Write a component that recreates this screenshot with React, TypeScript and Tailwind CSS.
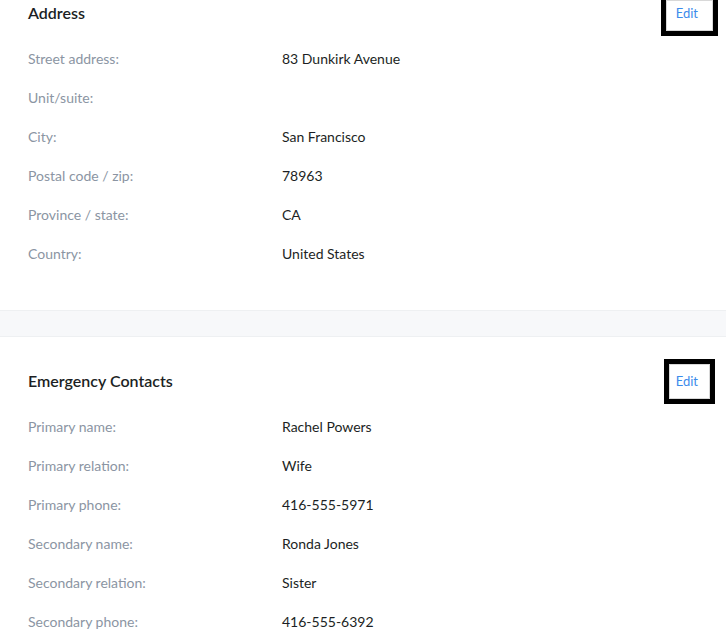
type Row = { label: string; value: string };

const address: Row[] = [
  { label: "Street address:", value: "83 Dunkirk Avenue" },
  { label: "Unit/suite:", value: "" },
  { label: "City:", value: "San Francisco" },
  { label: "Postal code / zip:", value: "78963" },
  { label: "Province / state:", value: "CA" },
  { label: "Country:", value: "United States" },
];

const contacts: Row[] = [
  { label: "Primary name:", value: "Rachel Powers" },
  { label: "Primary relation:", value: "Wife" },
  { label: "Primary phone:", value: "416-555-5971" },
  { label: "Secondary name:", value: "Ronda Jones" },
  { label: "Secondary relation:", value: "Sister" },
  { label: "Secondary phone:", value: "416-555-6392" },
];

const EditButton = ({ boxClass }: { boxClass: string }) => {
  return (
    <button className="relative text-[13px] text-[#3b8beb] leading-none">
      Edit
      <span
        className={`absolute border-black border-[5px] outline outline-1 outline-[#d8d8d8] -outline-offset-[6px] ${boxClass}`}
      />
    </button>
  );
};

const Section = ({
  title,
  rows,
  className,
  boxClass,
}: {
  title: string;
  rows: Row[];
  className: string;
  boxClass: string;
}) => {
  return (
    <section className={`bg-white px-7 ${className}`}>
      <div className="flex h-[42px] items-center justify-between">
        <h2 className="text-[16px] font-semibold text-[#1c1f24]">{title}</h2>
        <EditButton boxClass={boxClass} />
      </div>
      <div className="mt-[5px]">
        {rows.map((r) => (
          <div key={r.label} className="flex h-[39px] items-center text-[14px]">
            <span className="w-[254px] text-[#8b95a3]">{r.label}</span>
            <span className="text-[#1c1f24]">{r.value}</span>
          </div>
        ))}
      </div>
    </section>
  );
};

export default function App() {
  return (
    <div
      className="h-[637px] w-[726px] overflow-hidden bg-white"
      style={{ fontFamily: "Lato, 'Noto Sans', sans-serif" }}
    >
      <Section
        title="Address"
        rows={address}
        className="-mt-[8px] pb-[37px]"
        boxClass="-left-[15px] -right-[20px] -top-[12px] -bottom-[16px]"
      />
      <div className="h-[27px] border-y border-[#eef0f2] bg-[#f7f8fa]" />
      <Section
        title="Emergency Contacts"
        rows={contacts}
        className="pt-[23px]"
        boxClass="-left-[12px] -right-[17px] -top-[16px] -bottom-[16px]"
      />
    </div>
  );
}
